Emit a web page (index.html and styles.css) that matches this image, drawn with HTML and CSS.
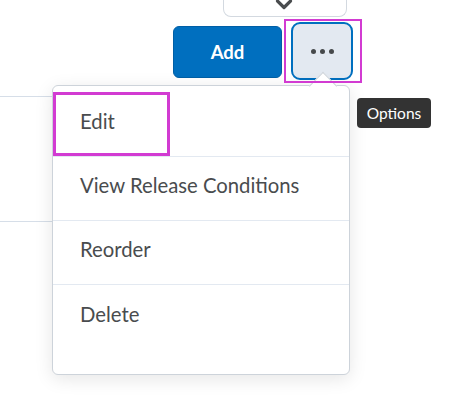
FILE: index.html
```html
<!DOCTYPE html>
<html>
<head>
<meta charset="utf-8">
<link rel="stylesheet" href="styles.css">
</head>
<body>
<div class="page">
  <div class="tab">
    <svg class="chev" width="18" height="12" viewBox="0 0 18 12"><path d="M2.5 2 L9 8.5 L15.5 2" fill="none" stroke="#494c4e" stroke-width="3.2" stroke-linecap="round" stroke-linejoin="round"/></svg>
  </div>
  <div class="toolbar">
    <button class="btn-add">Add</button>
    <div class="opt-wrap">
      <button class="btn-opt" aria-label="Options"><span class="dot"></span><span class="dot"></span><span class="dot"></span></button>
    </div>
  </div>
  <div class="list">
    <div class="row"></div>
    <div class="row"></div>
  </div>
  <div class="menu">
    <span class="pointer"></span>
    <ul class="items">
      <li class="item"><span class="focus-ring"></span>Edit</li>
      <li class="item">View Release Conditions</li>
      <li class="item">Reorder</li>
      <li class="item last">Delete</li>
    </ul>
  </div>
  <div class="tooltip">Options</div>
</div>
</body>
</html>
```
FILE: styles.css
```css
html, body {
  margin: 0;
  padding: 0;
  background: #ffffff;
}
.page {
  position: relative;
  width: 462px;
  height: 401px;
  overflow: hidden;
  font-family: Lato, "Noto Sans", sans-serif;
  color: #494c4e;
}
.tab {
  box-sizing: border-box;
  margin-left: 223px;
  width: 124px;
  height: 17px;
  border: 1px solid #d3d9e0;
  border-top: 0;
  border-radius: 0 0 8px 8px;
  display: flex;
  justify-content: center;
  align-items: flex-start;
}
.chev {
  display: block;
  margin-top: -1px;
  margin-left: -2px;
}
.toolbar {
  display: flex;
  align-items: flex-start;
  margin-top: 2px;
  margin-left: 173px;
  height: 64px;
}
.btn-add {
  box-sizing: border-box;
  width: 109px;
  height: 52px;
  margin-top: 7px;
  margin-right: 2px;
  border: 1px solid #005fa6;
  border-radius: 6px;
  background: #006fbf;
  color: #ffffff;
  font-family: Lato, "Noto Sans", sans-serif;
  font-weight: 700;
  font-size: 18.5px;
  padding: 0;
}
.opt-wrap {
  position: relative;
  box-sizing: border-box;
  width: 78px;
  height: 64px;
  padding: 3px 9px 3px 7px;
}
.opt-wrap::after {
  content: "";
  position: absolute;
  left: 0;
  top: 0;
  right: 0;
  bottom: 0;
  border: 2px solid #d23bd2;
  z-index: 5;
}
.btn-opt {
  box-sizing: border-box;
  width: 62px;
  height: 58px;
  border: 2px solid #006fbf;
  border-radius: 9px;
  background: #e3e9f1;
  display: flex;
  align-items: center;
  justify-content: center;
  gap: 4px;
  padding: 0;
}
.dot {
  width: 5px;
  height: 5px;
  border-radius: 50%;
  background: #46494b;
}
.list {
  margin-top: 13px;
  width: 60px;
}
.row {
  height: 124px;
  border-top: 1px solid #d6dee8;
}
.menu {
  position: absolute;
  left: 52px;
  top: 85px;
  box-sizing: border-box;
  width: 298px;
  height: 290px;
  background: #ffffff;
  border: 1px solid #cdd3da;
  border-radius: 6px;
  box-shadow: 0 4px 18px rgba(0, 0, 0, 0.10);
  padding: 7px 0 26px;
  z-index: 2;
}
.pointer {
  position: absolute;
  left: 260px;
  top: -10px;
  width: 19px;
  height: 19px;
  background: #ffffff;
  border-top: 1px solid #cdd3da;
  border-left: 1px solid #cdd3da;
  transform: rotate(45deg);
}
.items {
  list-style: none;
  margin: 0;
  padding: 0;
  position: relative;
}
.item {
  position: relative;
  box-sizing: border-box;
  height: 64px;
  border-bottom: 1px solid #e3e9f1;
  display: flex;
  align-items: center;
  padding: 0 0 7px 27px;
  font-size: 20.3px;
  color: #494c4e;
}
.item.last {
  border-bottom: 0;
}
.focus-ring {
  position: absolute;
  left: 0;
  top: -1px;
  box-sizing: border-box;
  width: 117px;
  height: 64px;
  border: 3px solid #d23bd2;
}
.tooltip {
  position: absolute;
  left: 357px;
  top: 98px;
  width: 74px;
  height: 30px;
  border-radius: 4px;
  background: #333333;
  color: #ffffff;
  font-size: 15.5px;
  display: flex;
  align-items: center;
  justify-content: center;
  z-index: 3;
}
```
